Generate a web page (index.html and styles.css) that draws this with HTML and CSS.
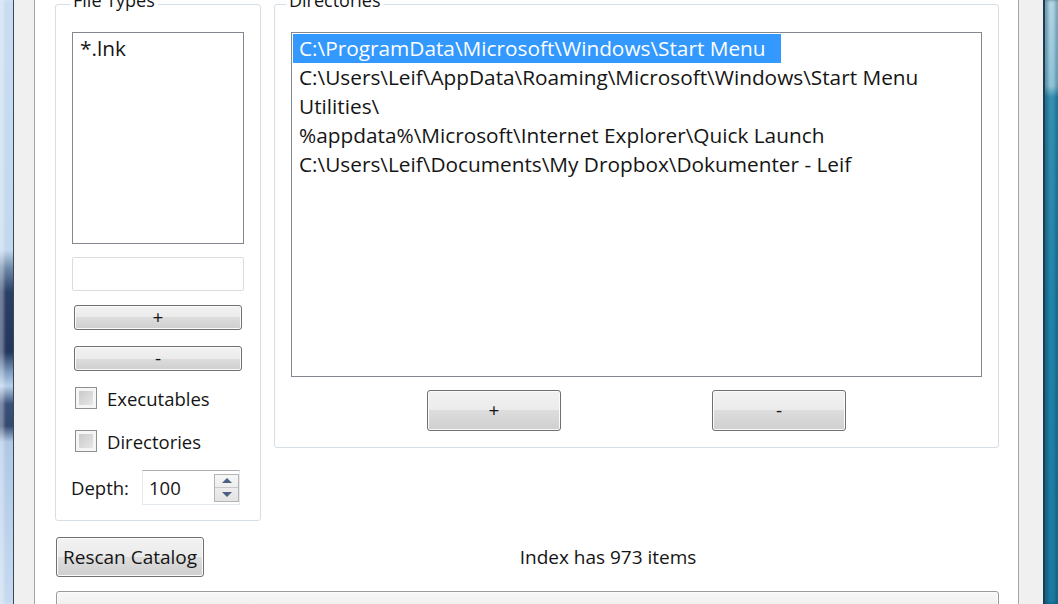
FILE: index.html
```html
<!DOCTYPE html>
<html lang="en">
<head>
    <meta charset="UTF-8">
    <title>Catalog Options</title>
    <link rel="stylesheet" href="styles.css">
</head>
<body>
    <div class="window">
        <div class="frame frame-left"></div>
        <div class="gutter"></div>

        <div class="pane">
            <div class="groups">
                <!-- File Types -->
                <fieldset class="group group-types">
                    <legend>File Types</legend>
                    <div class="list list-types">
                        <div class="row">*.lnk</div>
                    </div>
                    <div class="edit"></div>
                    <button class="btn btn-small">+</button>
                    <button class="btn btn-small btn-minus">-</button>
                    <label class="check"><span class="box"></span>Executables</label>
                    <label class="check check-dirs"><span class="box"></span>Directories</label>
                    <div class="depth">
                        <span class="depth-label">Depth:</span>
                        <div class="spin">
                            <span class="spin-value">100</span>
                            <span class="spin-arrows">
                                <span class="arrow arrow-up"></span>
                                <span class="arrow arrow-down"></span>
                            </span>
                        </div>
                    </div>
                </fieldset>

                <!-- Directories -->
                <fieldset class="group group-dirs">
                    <legend>Directories</legend>
                    <div class="list list-dirs">
                        <div class="row selected">C:\ProgramData\Microsoft\Windows\Start Menu</div>
                        <div class="row">C:\Users\Leif\AppData\Roaming\Microsoft\Windows\Start Menu</div>
                        <div class="row">Utilities\</div>
                        <div class="row">%appdata%\Microsoft\Internet Explorer\Quick Launch</div>
                        <div class="row">C:\Users\Leif\Documents\My Dropbox\Dokumenter - Leif</div>
                    </div>
                    <div class="dir-buttons">
                        <button class="btn btn-wide">+</button>
                        <button class="btn btn-wide">-</button>
                    </div>
                </fieldset>
            </div>

            <div class="status">
                <button class="btn btn-rescan">Rescan Catalog</button>
                <span class="count">Index has 973 items</span>
            </div>
            <div class="bar"></div>
        </div>

        <div class="gutter gutter-right"></div>
        <div class="frame frame-right"></div>
    </div>
</body>
</html>
```

FILE: styles.css
```css
* {
    margin: 0;
    padding: 0;
    box-sizing: border-box;
}
body {
    width: 1058px;
    height: 604px;
    overflow: hidden;
    background: #f0f0f0;
    font-family: 'Open Sans', sans-serif;
    font-size: 18px;
    color: #151515;
}
.window {
    display: flex;
    height: 604px;
}

/* window chrome */
.frame-left {
    width: 14px;
    border-right: 1px solid #3b4757;
    background: linear-gradient(to bottom, #c8ddf2 0, #c2d8ee 250px, #6f89a8 268px, #2a3f66 292px, #22365e 352px, #7f9bbf 372px, #b8d0ea 386px, #3a5079 404px, #34496f 426px, #b0c8e6 442px, #c6dbf1 604px);
    box-shadow: inset 4px 0 3px rgba(255, 255, 255, 0.35);
}
.gutter {
    width: 20px;
    background: #f0f0f0;
}
.gutter-right {
    width: 24px;
}
.frame-right {
    width: 15px;
    border-left: 2px solid #1d3e50;
    background: linear-gradient(to bottom, #b3d7e6 0, #8ec4da 86px, #3590b2 97px, #2284ab 300px, #1c7aa2 604px);
    box-shadow: inset 3px 0 3px rgba(10, 50, 70, 0.35), inset -3px 0 3px rgba(10, 50, 70, 0.3);
}
.pane {
    width: 985px;
    background: #fff;
    border-left: 1px solid #a5a5a5;
    border-right: 1px solid #a5a5a5;
    padding: 0 19px 0 20px;
}

/* group boxes */
.groups {
    display: flex;
    align-items: flex-start;
    gap: 13px;
    margin-top: -11px;
}
.group {
    border: 1px solid #d5dfe5;
    border-radius: 3px;
    padding: 0 16px 16px;
    min-width: 0;
}
.group legend {
    padding: 0 3px 8px;
    margin-left: -2px;
    line-height: 22px;
}
.group-dirs legend {
    margin-left: -5px;
}
.group-types {
    width: 206px;
    padding-bottom: 15px;
}
.group-dirs {
    flex: 1;
}

/* list boxes */
.list {
    margin-top: 13px;
    border: 1px solid #828790;
    padding: 1px;
    background: #fff;
    white-space: nowrap;
    overflow: hidden;
    font-size: 20.8px;
}
.list-types {
    height: 212px;
}
.list-dirs {
    height: 345px;
}
.row {
    height: 29px;
    line-height: 29px;
    padding: 0 6px;
}
.row.selected {
    width: fit-content;
    padding: 0 15px 0 6px;
    background: #3399ff;
    color: #fff;
}

.edit {
    margin-top: 13px;
    height: 34px;
    border: 1px solid #dcdcdc;
    border-radius: 2px;
}

/* buttons */
.btn {
    display: block;
    font-family: inherit;
    font-size: 19px;
    color: #151515;
    line-height: 1;
    border: 1px solid #707070;
    border-radius: 3px;
    background: linear-gradient(to bottom, #f2f2f2, #ebebeb 50%, #dddddd 50%, #cfcfcf);
    box-shadow: inset 0 0 0 1px #fbfbfb;
}
.btn-small {
    width: calc(100% - 4px);
    height: 25px;
    margin: 14px 2px 0;
}
.btn-minus {
    margin-top: 16px;
}
.dir-buttons {
    display: flex;
    justify-content: center;
    gap: 151px;
    margin-top: 13px;
}
.btn-wide {
    width: 134px;
    height: 41px;
}

/* check boxes */
.check {
    display: flex;
    align-items: center;
    gap: 10px;
    height: 22px;
    margin-top: 16px;
    padding-left: 3px;
    font-size: 18.5px;
}
.check-dirs {
    margin-top: 21px;
}
.box {
    width: 22px;
    height: 22px;
    border: 1px solid #8e8f8f;
    background: linear-gradient(135deg, #c4c4c4, #ececec);
    box-shadow: inset 0 0 0 3px #f5f5f5;
}

/* depth spinner */
.depth {
    display: flex;
    align-items: center;
    margin-top: 18px;
    font-size: 18.5px;
}
.depth-label {
    width: 71px;
    margin-left: -1px;
}
.spin {
    display: flex;
    align-items: center;
    width: 98px;
    height: 35px;
    padding-left: 6px;
    border: 1px solid #e3e9ef;
    border-top-color: #abadb3;
}
.spin-arrows {
    display: flex;
    flex-direction: column;
    margin-left: auto;
    width: 25px;
    height: 28px;
    border: 1px solid #b4b4b4;
    background: linear-gradient(to bottom, #f6f6f6, #e4e4e4);
}
.arrow {
    flex: 1;
    display: flex;
    align-items: center;
    justify-content: center;
}
.arrow-up {
    border-bottom: 1px solid #c8c8c8;
}
.arrow-up::after, .arrow-down::after {
    content: "";
    border-left: 5px solid transparent;
    border-right: 5px solid transparent;
}
.arrow-up::after {
    border-bottom: 5px solid #4d6185;
}
.arrow-down::after {
    border-top: 5px solid #4d6185;
}

/* status row */
.status {
    display: flex;
    align-items: center;
    margin-top: 16px;
}
.btn-rescan {
    height: 40px;
    padding: 0 6px;
    margin-left: 1px;
}
.count {
    flex: 1;
    text-align: center;
    padding-left: 13px;
    font-size: 19px;
}
.bar {
    margin: 14px 0 0 1px;
    height: 40px;
    border: 1px solid #9a9a9a;
    border-radius: 3px;
    background: linear-gradient(to bottom, #f7f7f7, #ececec 50%, #dedede 50%, #d4d4d4);
    box-shadow: inset 0 0 0 1px #fcfcfc;
}
```
